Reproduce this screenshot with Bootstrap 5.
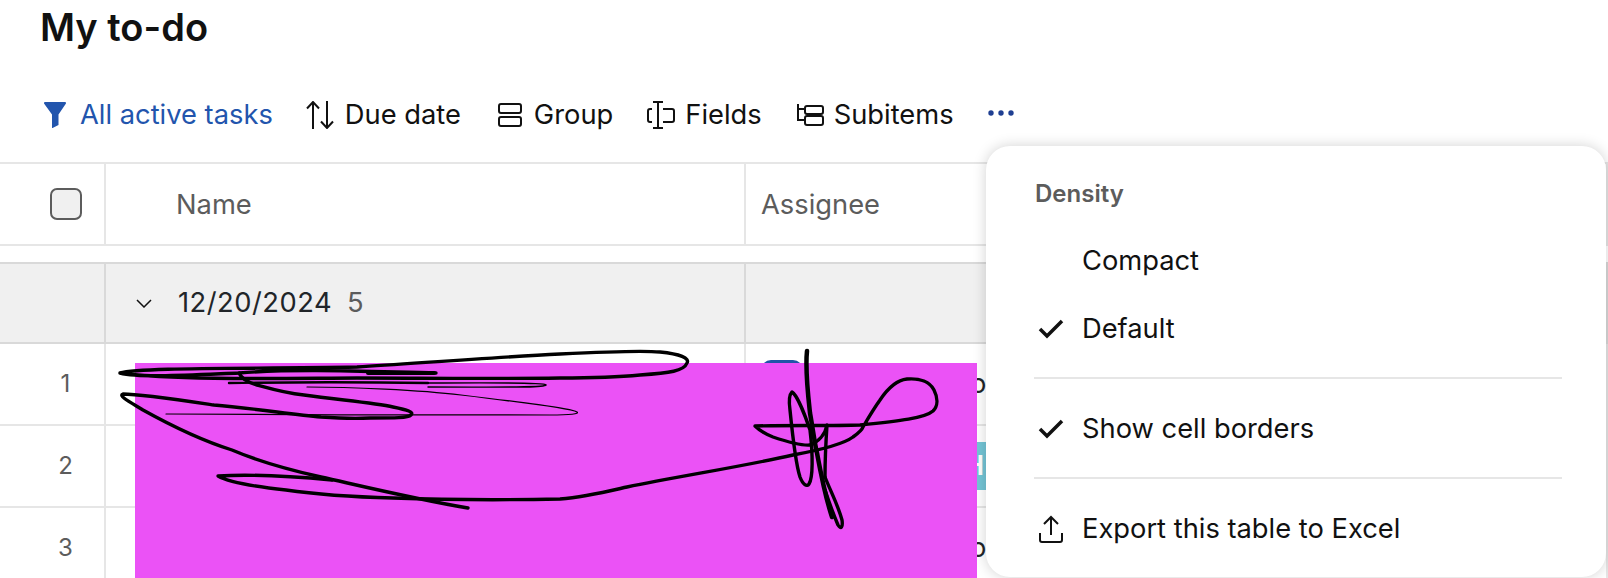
<!DOCTYPE html>
<html lang="en">
<head>
  <meta charset="UTF-8">
  <meta name="viewport" content="width=device-width, initial-scale=1.0">
  <title>My to-do</title>
  <link href="https://cdn.jsdelivr.net/npm/bootstrap@5.3.2/dist/css/bootstrap.min.css" rel="stylesheet">
  <style>
    html, body { height: 578px; overflow: hidden; }
    body { font-family: Inter, "Liberation Sans", sans-serif; color: #111; background: #fff; position: relative; }
    .page-title { font-size: 38px; font-weight: 600; line-height: 40px; margin: 0; padding: 7px 0 0 40px; height: 49px; }
    .toolbar { height: 113px; padding-left: 44px; gap: 34px; }
    .tool { display: flex; align-items: center; gap: 12px; color: #111; margin-top: 50px; height: 32px; padding: 0; border: 0; font-size: 27.300px; line-height: 32px; }
    .tool svg { display: block; flex: none; }
    .tool-active { color: #2255ad; gap: 14px; }
    .tool-sort { gap: 11px; margin-left: -1px; }
    .tool-group { margin-left: 3px; }
    .tool-tight { gap: 10px; }
    .tool-dots { margin-top: 48px; }
    .todo-table { table-layout: fixed; width: 1608px; margin: 0; border-collapse: separate; border-spacing: 0; }
    .todo-table td, .todo-table th { padding: 0; border: 0; border-bottom: 2px solid #e6e6e6; border-right: 2px solid #e6e6e6; font-size: 27.300px; font-weight: 400; vertical-align: middle; box-shadow: none; }
    .todo-table .head-row th { height: 84px; color: #5c5c5c; border-top: 2px solid #e6e6e6; padding-top: 2px; }
    .box { display: block; width: 32px; height: 32px; margin: -2px 0 0 50px; background: #f0f0f0; border: 2px solid #5c5c5c; border-radius: 7px; }
    .gap-row td { height: 16px; border-right: 0; border-bottom: 0; }
    .group-row td { height: 82px; background: #f0f0f0; border-top: 2px solid #d9d9d9; border-bottom: 2px solid #d9d9d9; border-right-color: #d9d9d9; }
    .item-row td { height: 82px; }
    .todo-table .row-num { color: #5c5c5c; text-align: center; padding-left: 27px; font-size: 24px; }
    .todo-table .name-cell { padding-left: 70px; }
    .todo-table .assignee-cell { padding-left: 15px; }
    .todo-table .group-cell { padding-left: 30px; }
    .group-label { display: flex; align-items: center; gap: 26px; }
    .group-date { letter-spacing: .5px; }
    .group-count { color: #5c5c5c; margin-left: -11px; }
    .person { display: flex; align-items: center; height: 48px; }
    .avatar { width: 42px; height: 48px; border-radius: 10px; }
    .avatar-blue { background: #1f55a8; }
    .avatar-teal { width: 70px; margin-left: 169px; background: #74c5d6; color: #fff; font-weight: 600; display: flex; align-items: center; justify-content: flex-end; padding-right: 16px; }
    .person-tail { margin-left: 167px; }
    .person-tail-only { margin-left: 209px; }
    .redact { position: absolute; left: 135px; top: 363px; width: 842px; height: 215px; background: #eb52f6; }
    .scribble { position: absolute; left: 0; top: 0; pointer-events: none; }
    .options-menu { position: absolute; display: block; left: 986px; top: 146px; width: 620px; height: 431px; margin: 0; padding: 0; border: 0; border-radius: 24px; box-shadow: 0 0 14px rgba(0,0,0,.18); color: #111; }
    .options-menu .dropdown-header { padding: 30px 0 0 49px; font-size: 24px; line-height: 36px; font-weight: 600; color: #5c5c5c; height: 81px; }
    .options-menu .dropdown-item { display: flex; align-items: center; height: 68px; padding: 0 0 0 96px; font-size: 27.300px; color: #111; position: relative; }
    .options-menu .dropdown-item svg { position: absolute; left: 52px; }
    .options-menu .dropdown-divider { margin: 14px 44px 0 48px; border-top: 2px solid #e6e6e6; opacity: 1; }
    .options-menu .dropdown-divider + .dropdown-item { height: 98px; padding-top: 2px; }
    .options-menu .spaced-divider { margin-top: 0; }
  </style>
</head>
<body>
  <h1 class="page-title">My to-do</h1>

  <div class="toolbar d-flex">
    <button class="tool btn tool-active">
      <svg width="22" height="26" viewBox="0 0 22 26"><path d="M1 0H21C22 0 22.300 1 21.800 1.800L14.500 12.500V23L8 26.300V12.500L.2 1.800C-.3 1 0 0 1 0Z" fill="#2255ad"/></svg>
      All active tasks
    </button>
    <button class="tool btn tool-sort">
      <svg width="28" height="28" viewBox="0 0 28 28" fill="none" stroke="#111" stroke-width="2"><path d="M7 28V1M1 7.500 7 1l6 6.500M21 0V27M15 20.500 21 27l6-6.500"/></svg>
      Due date
    </button>
    <button class="tool btn tool-group">
      <svg width="24" height="24" viewBox="0 0 24 24" fill="none" stroke="#111" stroke-width="2"><rect x="1" y="1" width="22" height="9" rx="2"/><rect x="1" y="14" width="22" height="9" rx="2"/></svg>
      Group
    </button>
    <button class="tool btn tool-tight">
      <svg width="28" height="28" viewBox="0 0 28 28" fill="none" stroke="#111" stroke-width="2"><path d="M5 8H3a2 2 0 0 0-2 2v9a2 2 0 0 0 2 2h2M16 8h9a2 2 0 0 1 2 2v9a2 2 0 0 1-2 2h-9M11 1V27M6 1H16M6 27H16"/></svg>
      Fields
    </button>
    <button class="tool btn tool-tight">
      <svg width="28" height="23" viewBox="0 0 28 23" fill="none" stroke="#111" stroke-width="2"><path d="M2 0V16H9M2 5H9"/><rect x="9" y="2" width="18" height="8" rx="2"/><rect x="9" y="12" width="18" height="9" rx="2"/></svg>
      Subitems
    </button>
    <button class="tool btn tool-dots">
      <svg width="26" height="6" viewBox="0 0 26 6" fill="#1f3f92"><circle cx="3" cy="3" r="2.700"/><circle cx="13" cy="3" r="2.700"/><circle cx="23" cy="3" r="2.700"/></svg>
    </button>
  </div>

  <table class="table todo-table">
    <colgroup><col style="width:106px"><col style="width:640px"><col></colgroup>
    <thead>
      <tr class="head-row">
        <th><span class="box"></span></th>
        <th class="name-cell">Name</th>
        <th class="assignee-cell">Assignee</th>
      </tr>
    </thead>
    <tbody>
      <tr class="gap-row"><td></td><td></td><td></td></tr>
      <tr class="group-row">
        <td></td>
        <td class="group-cell">
          <div class="group-label">
            <svg width="16" height="9" viewBox="0 0 16 9" fill="none" stroke="#111" stroke-width="1.500"><path d="M1 1l7 7 7-7"/></svg>
            <span class="group-date">12/20/2024</span>
            <span class="group-count">5</span>
          </div>
        </td>
        <td></td>
      </tr>
      <tr class="item-row">
        <td class="row-num">1</td><td></td>
        <td class="assignee-cell"><div class="person"><span class="avatar avatar-blue"></span><span class="person-tail">o</span></div></td>
      </tr>
      <tr class="item-row">
        <td class="row-num">2</td><td></td>
        <td class="assignee-cell"><div class="person"><span class="avatar avatar-teal">H</span></div></td>
      </tr>
      <tr class="item-row">
        <td class="row-num">3</td><td></td>
        <td class="assignee-cell"><div class="person"><span class="person-tail-only">o</span></div></td>
      </tr>
    </tbody>
  </table>

  <div class="redact"></div>
  <svg class="scribble" width="1000" height="578" viewBox="0 0 1000 578" fill="none" stroke="#000" stroke-linecap="round" stroke-linejoin="round">
    <path stroke-width="3.400" d="M436 373C380 372 300 368 239 373C190 375 140 378 120 373C140 367 250 369 357 367C420 363 500 357 560 354C600 352 640 350 660 352C680 354 690 358 687 363C684 371 670 373 640 375C610 378 585 378 560 378C480 379 420 378 357 378C300 378 180 381 120 373"/>
    <path stroke-width="3.400" d="M239 373C242 380 250 383 257 385C275 390 285 393 304 395C340 400 375 403 393 407C408 410 414 412 411 415C408 418 395 418 370 418C350 419 335 418 321 417C290 414 250 408 214 405C180 400 140 394 123 394C118 396 130 402 143 410C170 425 200 440 232 450C260 462 290 470 321 477C370 488 420 500 468 508"/>
    <path stroke-width="3.400" d="M332 480C300 477 250 474 218 476C230 483 258 487 286 490C320 495 355 497 393 498C450 500 510 500 560 499C585 497 605 492 627 487C680 476 740 467 793 455C820 450 845 443 853 437C860 432 862 430 863 427C870 415 875 407 880 400C888 388 897 380 907 379C920 378 930 382 934 390C938 398 938 406 933 411C925 418 900 421 860 425C830 426 790 425 755 426C760 431 768 435 773 437C785 441 800 446 810 445C818 442 825 435 827 425C826 440 825 455 825 477"/>
    <path stroke-width="3.400" d="M792 392C789 395 789 403 790 410C792 430 796 465 800 477C803 485 807 487 809 484C813 478 813 455 810 430C805 415 797 395 792 392Z"/>
    <path stroke-width="4.500" d="M807 351C805 370 808 395 810 413C813 430 815 445 817 453C822 480 828 505 832 517"/>
    <path stroke-width="3.400" d="M825 477C830 490 838 505 842 520C843 527 841 530 838 525C835 518 830 505 825 490"/>
    <path stroke-width="2.400" d="M229 383C300 382 360 382 428 383"/>
    <path stroke-width="1.400" d="M428 383C450 383 548 382 546 385C544 388 500 387 428 387"/>
    <path stroke-width="1.200" d="M166 414C280 415 450 415 550 415C570 415 580 414 577 412C570 408 520 402 461 395C420 390 350 387 307 387"/>
    <path stroke-width="4" d="M368 373H434"/>
  </svg>

  <div class="dropdown-menu show options-menu">
    <div class="dropdown-header">Density</div>
    <a class="dropdown-item" href="#">Compact</a>
    <a class="dropdown-item" href="#">
      <svg width="26" height="20" viewBox="0 0 26 20" fill="none" stroke="#111" stroke-width="3.500"><path d="M2 10l7 7L24 2"/></svg>
      Default
    </a>
    <div class="dropdown-divider"></div>
    <a class="dropdown-item" href="#">
      <svg width="26" height="20" viewBox="0 0 26 20" fill="none" stroke="#111" stroke-width="3.500"><path d="M2 10l7 7L24 2"/></svg>
      Show cell borders
    </a>
    <div class="dropdown-divider spaced-divider"></div>
    <a class="dropdown-item" href="#">
      <svg width="26" height="28" viewBox="0 0 26 28" fill="none" stroke="#111" stroke-width="2"><path d="M13 20V2M6 9l7-7 7 7M2 18v7a2 2 0 0 0 2 2h18a2 2 0 0 0 2-2v-7"/></svg>
      Export this table to Excel
    </a>
  </div>

  <script src="https://cdn.jsdelivr.net/npm/bootstrap@5.3.2/dist/js/bootstrap.bundle.min.js"></script>
</body>
</html>
